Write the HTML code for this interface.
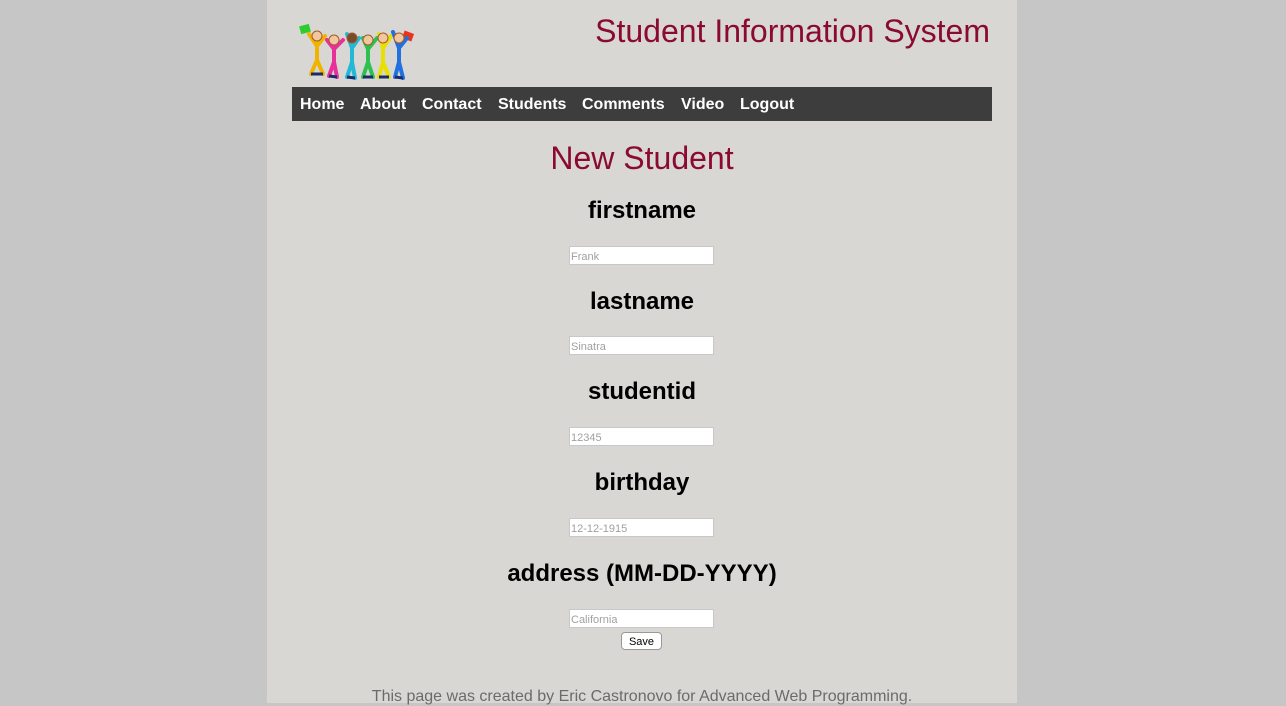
<!DOCTYPE html>
<html><head><meta charset="utf-8"><style>
html,body{margin:0;padding:0;}
body{background:#c6c6c6;width:1286px;height:703px;overflow:hidden;font-family:"Liberation Sans",Arial,sans-serif;}
#wrap{position:absolute;left:267px;top:0;width:750px;height:703px;background:#d8d7d3;}
#title{position:absolute;right:27px;top:13px;font-size:32px;color:#8b0a32;white-space:nowrap;}
#logo{position:absolute;left:30px;top:22px;}
#nav{position:absolute;left:25px;top:87px;width:700px;height:34px;background:#3d3d3d;}
#nav span{position:absolute;top:9px;color:#fff;font-weight:bold;font-size:16px;}
h1{position:absolute;left:0;width:750px;top:140px;margin:0;text-align:center;font-weight:normal;font-size:32px;color:#8b0a32;}
h2{position:absolute;left:0;width:750px;margin:0;text-align:center;font-size:24px;font-weight:bold;color:#000;}
.in{position:absolute;left:302px;height:17px;background:#fff;border:1px solid #c8c8c8;font-size:11px;color:#a0a0a0;line-height:21px;padding-left:1px;box-sizing:content-box;width:142px;overflow:hidden;}
#save{position:absolute;left:354px;top:632px;width:39px;height:16px;background:#fff;border:1px solid #999;border-radius:4px;font-size:11px;text-align:center;line-height:18px;}
#foot{position:absolute;left:0;width:750px;top:688px;text-align:center;font-size:16px;color:#6b6b6b;}
</style></head><body>
<div id="wrap">
<svg id="logo" width="122" height="62" viewBox="0 0 122 62">
<rect x="3" y="3" width="10" height="8" fill="#2ecc2e" transform="rotate(-15 8 7)"/>
<rect x="106" y="10" width="10" height="8" fill="#e8341c" transform="rotate(20 111 14)"/>
<g stroke-width="4" fill="none" stroke-linecap="round">
<path d="M20 18 L20 38 M20 38 L14 52 M20 38 L26 52 M20 24 L12 12 M20 24 L28 14" stroke="#f0b400"/>
<path d="M37 22 L37 40 M37 40 L32 54 M37 40 L40 55 M37 27 L30 18 M37 27 L46 18" stroke="#e8309a"/>
<path d="M55 20 L55 40 M55 40 L50 55 M55 40 L58 56 M55 26 L50 12 M55 26 L62 16" stroke="#22b8d8"/>
<path d="M71 22 L71 40 M71 40 L66 55 M71 40 L76 55 M71 27 L66 16 M71 27 L80 16" stroke="#30c050"/>
<path d="M86 20 L86 40 M86 40 L82 55 M86 40 L92 55 M86 26 L82 12 M86 26 L94 14" stroke="#e8e000"/>
<path d="M102 20 L102 40 M102 40 L98 55 M102 40 L106 56 M102 26 L96 10 M102 26 L110 16" stroke="#2070e0"/>
</g>
<g stroke="#1a2a6a" stroke-width="3" fill="none">
<path d="M14 52 L26 52 M32 54 L40 55 M50 55 L58 56 M66 55 L76 55 M82 55 L92 55 M98 55 L106 56"/>
</g>
<g fill="#f2c7a0" stroke="#a05a2a" stroke-width="1">
<circle cx="20" cy="14" r="5"/><circle cx="37" cy="18" r="5"/><circle cx="55" cy="16" r="5" fill="#7a4a2a"/>
<circle cx="71" cy="18" r="5"/><circle cx="86" cy="16" r="5"/><circle cx="102" cy="16" r="5"/>
</g>
</svg>
<div id="title">Student Information System</div>
<div id="nav">
<span style="left:8px">Home</span><span style="left:68px">About</span><span style="left:130px">Contact</span><span style="left:206px">Students</span><span style="left:290px">Comments</span><span style="left:389px">Video</span><span style="left:448px">Logout</span>
</div>
<h1>New Student</h1>
<h2 style="top:197px">firstname</h2>
<div class="in" style="top:246px">Frank</div>
<h2 style="top:288px">lastname</h2>
<div class="in" style="top:336px">Sinatra</div>
<h2 style="top:378px">studentid</h2>
<div class="in" style="top:427px">12345</div>
<h2 style="top:469px">birthday</h2>
<div class="in" style="top:518px">12-12-1915</div>
<h2 style="top:560px">address (MM-DD-YYYY)</h2>
<div class="in" style="top:609px">California</div>
<div id="save">Save</div>
<div id="foot">This page was created by Eric Castronovo for Advanced Web Programming.</div>
</div>
</body></html>
